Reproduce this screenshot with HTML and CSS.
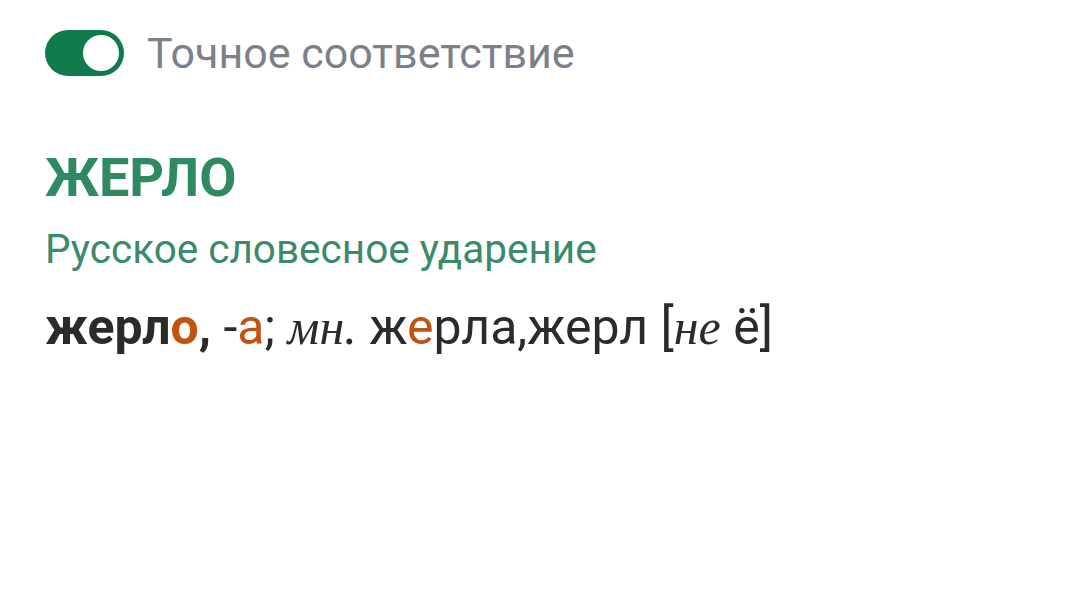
FILE: index.html
```html
<!DOCTYPE html>
<html lang="ru">
<head>
<meta charset="utf-8">
<link rel="stylesheet" href="styles.css">
</head>
<body>
<div class="page">
  <div class="switch-row">
    <span class="switch"><span class="knob"></span></span>
    <span class="switch-label">Точное соответствие</span>
  </div>
  <h1 class="word">ЖЕРЛО</h1>
  <div class="source">Русское словесное ударение</div>
  <p class="entry"><b>жерл<span class="acc">о</span>,</b> -<span class="acc">а</span>; <i class="ser">мн.</i> ж<span class="acc">е</span>рла,жерл [<i class="ser">не</i> ё]</p>
</div>
</body>
</html>
```
FILE: styles.css
```css
html, body { margin: 0; padding: 0; background: #fff; }
body { font-family: Roboto, "Noto Sans", sans-serif; }
.page { padding: 30px 45px; }
.switch-row { display: flex; align-items: center; gap: 23px; height: 46px; }
.switch { width: 79px; height: 46px; border-radius: 23px; background: #0f7a4c; display: flex; align-items: center; justify-content: flex-end; padding-right: 5px; box-sizing: border-box; }
.knob { width: 36px; height: 36px; border-radius: 50%; background: #fff; }
.switch-label { font-size: 43px; line-height: 50px; color: #7b8089; }
.word { margin: 70px 0 0; font-size: 54px; font-weight: 700; color: #2f8a61; line-height: 64px; }
.source { margin-top: 15px; font-size: 40.5px; color: #3b8a69; line-height: 48px; }
.entry { margin: 24px 0 0; font-size: 50px; color: #2b2b2b; line-height: 60px; }
.entry b { font-weight: 700; }
.acc { color: #c2520f; }
.ser { font-family: "Liberation Serif", serif; font-style: italic; }
```
